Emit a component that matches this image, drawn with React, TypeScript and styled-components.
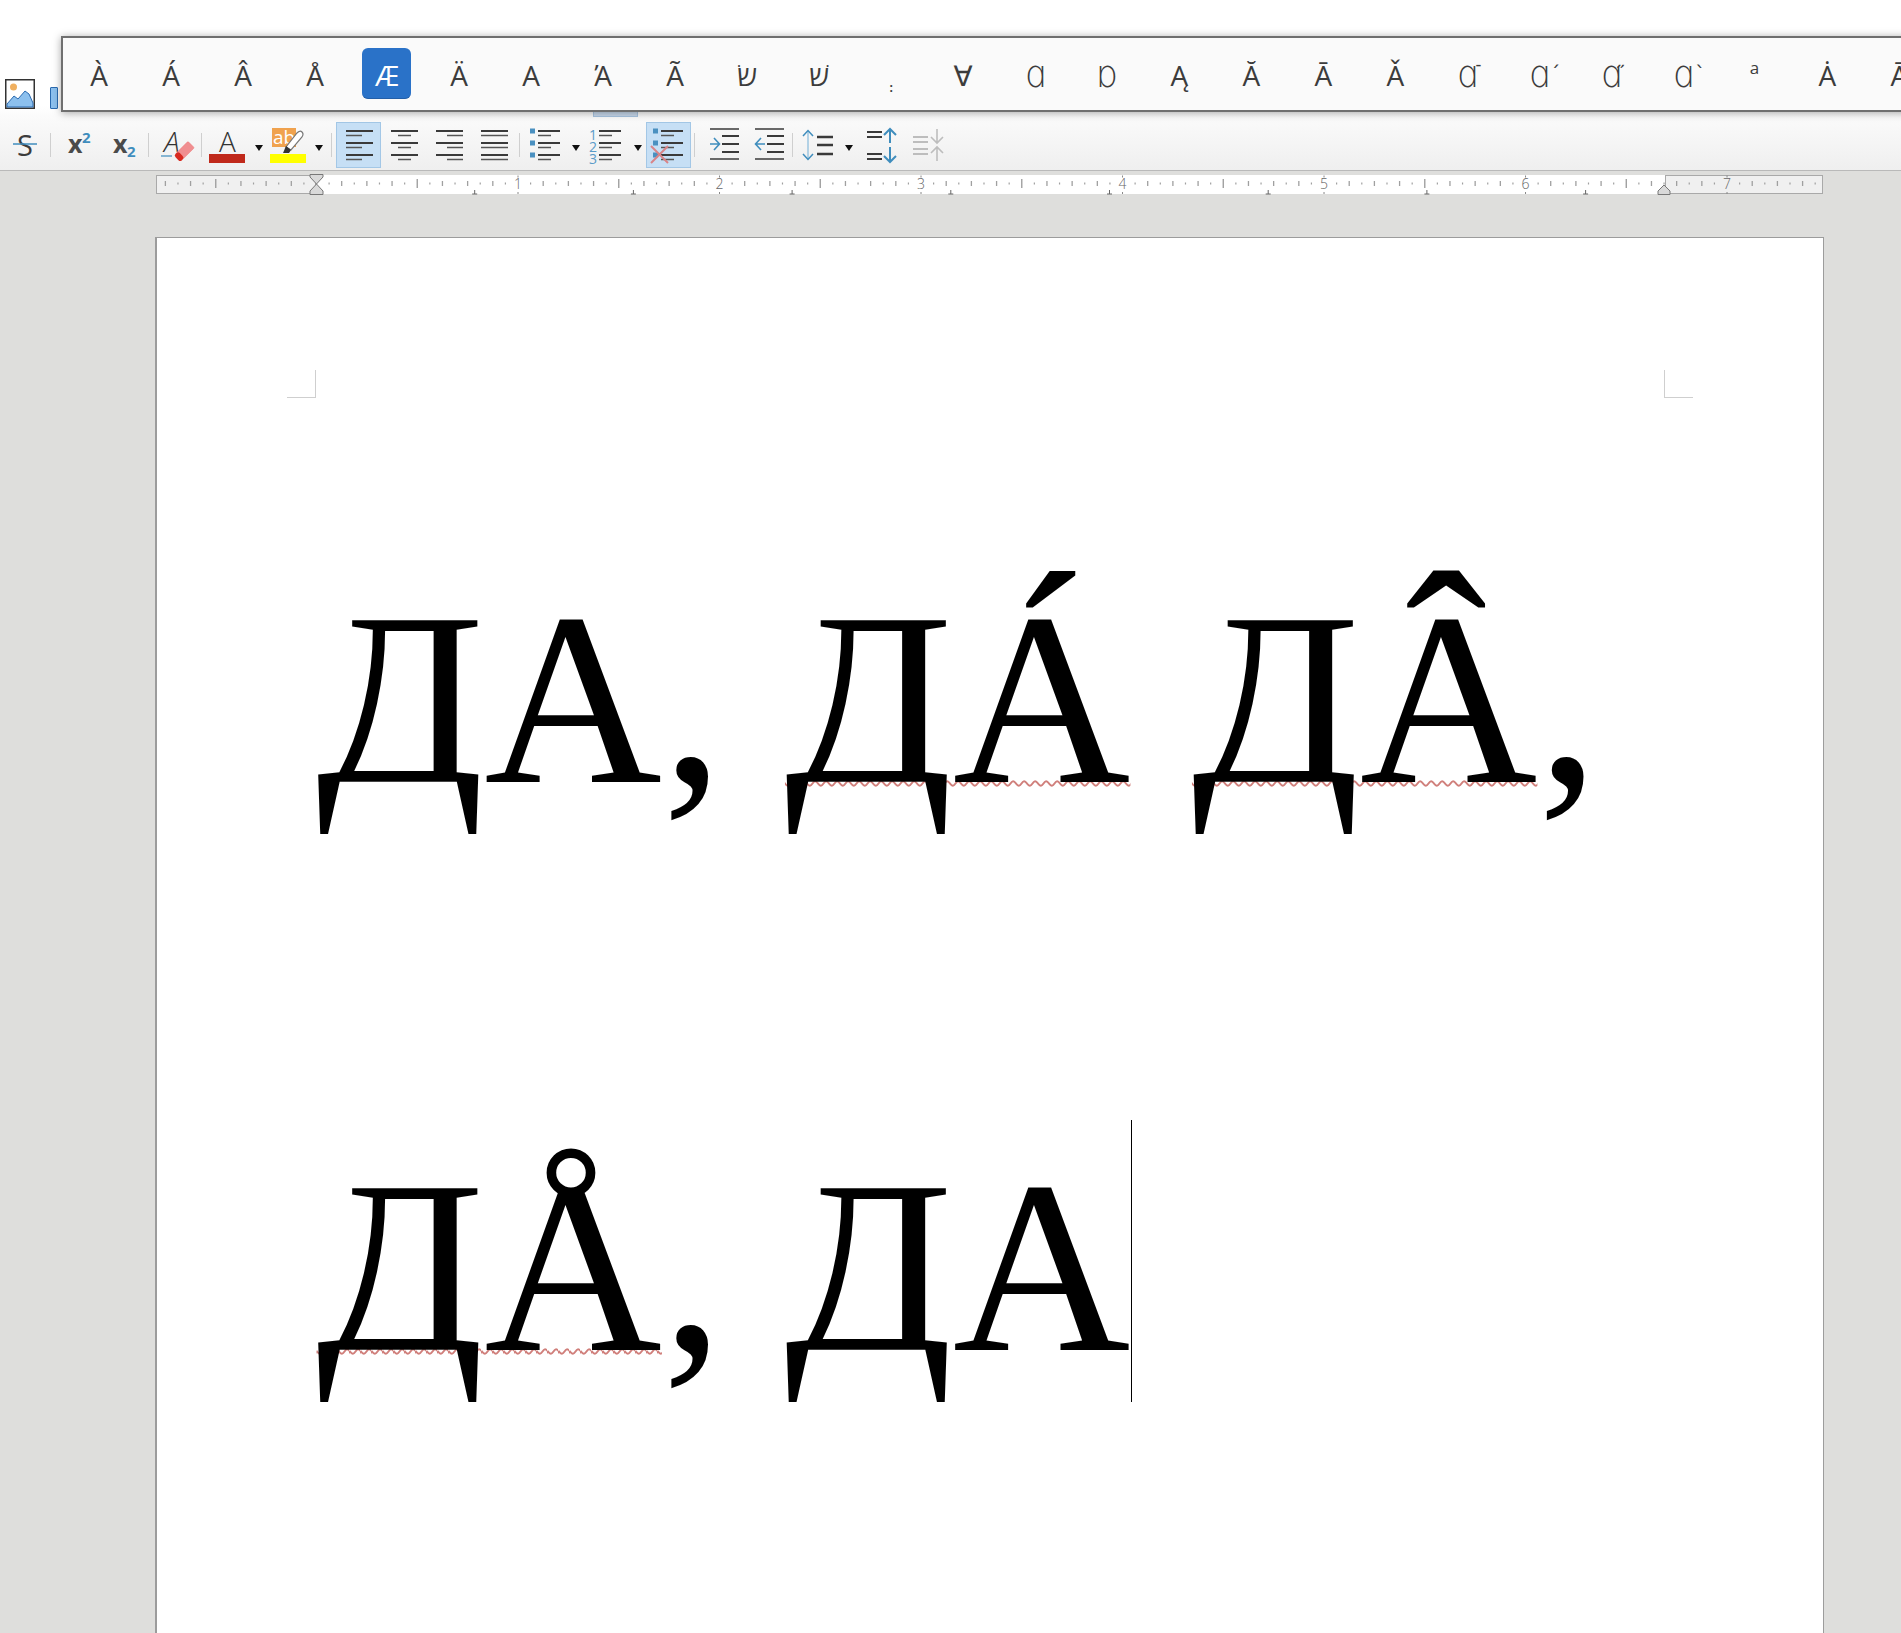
import React from "react";
import styled, { createGlobalStyle } from "styled-components";

const Global = createGlobalStyle`
  html, body { margin: 0; padding: 0; background: #dededc; overflow: hidden; }
  #root { height: 1633px; overflow: hidden; }
`;

const BLUE = "#3f8dbd";
const INK = "#3a3a3a";

const Shell = styled.div`
  position: relative;
  width: 1901px;
  height: 1633px;
  overflow: hidden;
  background: #dededc;
  font-family: "Open Sans", "DejaVu Sans", sans-serif;
`;
const TopBar = styled.header`
  height: 170px;
  border-bottom: 1px solid #b9b9b9;
  background: linear-gradient(#fff 0, #fff 62%, #fafafa 70%, #efefef 100%);
`;
const UpperRow = styled.div`
  display: flex;
  align-items: flex-start;
  height: 122px;
`;
const PictureIcon = styled.svg`
  width: 30px;
  height: 30px;
  margin: 79px 0 0 5px;
`;
const BlueBar = styled.div`
  box-sizing: border-box;
  width: 8px;
  height: 22px;
  margin: 87px 0 0 15px;
  background: #8cc0ee;
  border: 1px solid #2a6ab0;
  border-radius: 1px;
`;
const HiddenActive = styled.div`
  box-sizing: border-box;
  width: 45px;
  height: 27px;
  margin: 90px 0 0 535px;
  background: #c8d9ec;
  border: 1px solid #a8c4e0;
`;
const LowerRow = styled.div`
  display: flex;
  align-items: flex-start;
  height: 46px;
  padding-left: 2px;
`;
const Btn = styled.div<{ $active?: boolean; $w?: number }>`
  box-sizing: border-box;
  flex: none;
  position: relative;
  width: ${(p) => p.$w ?? 45}px;
  height: 46px;
  background: ${(p) => (p.$active ? "#c6dff5" : "transparent")};
  outline: ${(p) => (p.$active ? "1px solid #a3c7e6" : "none")};
  outline-offset: -1px;
  svg { display: block; }
`;
const Sep = styled.div<{ $l: number; $r: number }>`
  flex: none;
  width: 1px;
  height: 24px;
  margin: 11px ${(p) => p.$r}px 0 ${(p) => p.$l}px;
  background: #cfcfcf;
`;
const CaretBtn = styled.div<{ $w: number }>`
  flex: none;
  display: flex;
  justify-content: center;
  width: ${(p) => p.$w}px;
  padding-top: 23px;
  &::after {
    content: "";
    border-left: 4.5px solid transparent;
    border-right: 4.5px solid transparent;
    border-top: 6px solid #111;
  }
`;
const Popup = styled.div`
  position: absolute;
  left: 61px;
  top: 36px;
  display: flex;
  height: 72px;
  width: 1900px;
  border: 2px solid #6f6f6f;
  background: #fafafa;
  box-shadow: 0 1px 8px rgba(0, 0, 0, 0.35);
`;
const Cell = styled.div<{ $sel?: boolean; $tiny?: boolean; $sup?: boolean }>`
  position: relative;
  flex: none;
  display: flex;
  align-items: center;
  justify-content: center;
  width: 72.03px;
  height: 72px;
  padding-top: 2px;
  box-sizing: border-box;
  font-size: ${(p) => (p.$tiny ? 12 : p.$sup ? 17 : 28)}px;
  font-weight: 400;
  color: ${(p) => (p.$sel ? "#fff" : "#3c3c3c")};
  line-height: 1;
  z-index: 0;
  &::before {
    content: "";
    display: ${(p) => (p.$sel ? "block" : "none")};
    position: absolute;
    z-index: -1;
    left: 11px;
    top: 10px;
    width: 49px;
    height: 51px;
    border-radius: 6px;
    background: #2a72c8;
    border-bottom: 1px solid #235fa8;
    box-sizing: border-box;
  }
`;
const Tall = styled.span`
  display: inline-block;
  font-weight: 300;
  transform: scale(1.25, 1.35);
  transform-origin: 50% 80%;
`;
const Mod = styled.span<{ $x: number; $y: number; $s?: number }>`
  display: inline-block;
  width: 0;
  font-size: ${(p) => p.$s ?? 20}px;
  transform: translate(${(p) => p.$x}px, ${(p) => p.$y}px);
`;
const Tiny = styled.span`
  transform: translateY(13px);
  font-weight: 700;
`;
const Sup = styled.span`
  transform: translate(-1px, -8px);
`;
const Main = styled.main`
  padding-top: 4px;
`;
const Ruler = styled.div`
  position: relative;
  display: flex;
  width: 1667px;
  height: 19px;
  margin-left: 156px;
`;
const RulerSide = styled.div<{ $w: number }>`
  box-sizing: border-box;
  flex: none;
  width: ${(p) => p.$w}px;
  background: #f0f0f0;
  border: 1px solid #a9a9a9;
`;
const RulerBody = styled.div`
  flex: 1;
  background: #fff;
`;
const RulerMarks = styled.svg`
  position: absolute;
  left: 0;
  top: -1px;
  width: 1667px;
  height: 21px;
  overflow: visible;
`;
const Page = styled.section`
  box-sizing: border-box;
  width: 1669px;
  height: 1500px;
  margin: 43px 0 0 154.5px;
  background: #fff;
  border: 1px solid #9c9c9c;
  border-bottom: 0;
  border-left-width: 2px;
  padding-top: 132px;
`;
const Corners = styled.div`
  display: flex;
  justify-content: space-between;
  padding: 0 130px 0 130.5px;
`;
const Corner = styled.div<{ $right?: boolean }>`
  width: 29px;
  height: 28px;
  box-sizing: border-box;
  border-bottom: 1px solid #cfcfcf;
  border-${(p) => (p.$right ? "left" : "right")}: 1px solid #cfcfcf;
`;
const Body = styled.div`
  margin-top: 17px;
  padding-left: 160px;
  font-family: "Liberation Serif", "Times New Roman", serif;
  font-weight: 400;
  font-size: 246px;
  line-height: 568px;
  color: #000;
  white-space: pre;
`;
const Line = styled.div`
  height: 568px;
`;
const Misspelt = styled.span`
  text-decoration: underline wavy #d07f7b 1.5px;
  text-underline-offset: -2px;
  text-decoration-skip-ink: none;
`;
const TextCaret = styled.span`
  display: inline-block;
  width: 1px;
  height: 282px;
  margin-left: 1px;
  background: #000;
  vertical-align: -52px;
`;

const L = ({ a, b, y, w = 2, c = INK }: { a: number; b: number; y: number; w?: number; c?: string }) => (
  <line x1={a} x2={b} y1={y} y2={y} stroke={c} strokeWidth={w} />
);
const Ico = ({ children, w = 45 }: { children: React.ReactNode; w?: number }) => (
  <svg width={w} height={46} viewBox={`0 0 ${w} 46`}>
    {children}
  </svg>
);
const FONT = '"Open Sans", sans-serif';

const Align = ({ mode }: { mode: "l" | "c" | "r" | "j" }) => {
  const ys = [9, 21, 33];
  const shortA = mode === "l" ? 10 : mode === "c" ? 17 : mode === "r" ? 21 : 10;
  const shortB = mode === "l" ? 26 : mode === "c" ? 30 : 37;
  return (
    <Ico>
      {ys.map((y) => (
        <g key={y}>
          <L a={10} b={37} y={y} />
          <L a={shortA} b={mode === "j" ? 37 : shortB} y={y + 4.5} w={1.5} c="#555" />
        </g>
      ))}
    </Ico>
  );
};
const BulletList = ({ x = false }: { x?: boolean }) => (
  <Ico>
    {[9, 21, 33].map((y) => (
      <g key={y}>
        <rect x={7} y={y - 2.5} width={5} height={5} fill="#4a90c0" />
        <L a={15} b={37} y={y} />
        <L a={15} b={28} y={y + 4.5} w={1.5} c="#555" />
      </g>
    ))}
    {x && <path d="M5 24 L22 41 M22 24 L5 41" stroke="#d98488" strokeWidth={2} />}
  </Ico>
);
const NumberList = () => (
  <Ico>
    {[9, 21, 33].map((y, i) => (
      <g key={y}>
        <text x={9} y={y + 9} textAnchor="middle" fontFamily={FONT} fontSize={14} fill="#5a9bc8">
          {i + 1}
        </text>
        <L a={15} b={37} y={y} />
        <L a={15} b={28} y={y + 4.5} w={1.5} c="#555" />
      </g>
    ))}
  </Ico>
);
const Indent = ({ out = false }: { out?: boolean }) => (
  <Ico>
    <L a={8} b={37} y={7} w={1.5} />
    <L a={8} b={37} y={37} w={1.5} />
    {[14, 22, 30].map((y) => (
      <L key={y} a={20} b={37} y={y} />
    ))}
    {out ? (
      <path d="M18 22 H9 M14 16 L8.5 22 L14 28" stroke={BLUE} strokeWidth={1.6} fill="none" />
    ) : (
      <path d="M8 22 H17 M12 16 L17.5 22 L12 28" stroke={BLUE} strokeWidth={1.6} fill="none" />
    )}
  </Ico>
);

const Ruling = () => {
  const x0 = 160.5;
  const step = 12.594;
  const ticks: React.ReactNode[] = [];
  for (let i = -12; i <= 119; i++) {
    const x = x0 + i * step;
    if (i === 0) continue;
    if (i % 16 === 0) {
      ticks.push(
        <g key={i}>
          <text x={x} y={15} textAnchor="middle" fontFamily={FONT} fontSize={14} fontWeight={300} fill="#666">
            {i / 16}
          </text>
          <rect x={x - 0.5} y={1.5} width={1} height={2} fill="#888" />
          <rect x={x - 0.5} y={18} width={1} height={2} fill="#888" />
        </g>
      );
    } else {
      const h = i % 8 === 0 ? 9 : i % 2 === 0 ? 5 : 2;
      const w = i % 8 === 0 ? 1.4 : i % 2 === 0 ? 1.3 : 1.2;
      ticks.push(<rect key={i} x={x - w / 2} y={9.5 - h / 2} width={w} height={h} fill="#a0a0a0" />);
    }
  }
  const tabs = [0, 1, 2, 3, 4, 5, 6, 7].map((k) => 318.7 + k * 158.7);
  return (
    <RulerMarks viewBox="0 0 1667 21">
      {ticks}
      {tabs.map((x) => (
        <path key={x} d={`M${x} 16 V20 M${x - 2.5} 20 H${x + 2.5}`} stroke="#666" strokeWidth={1} fill="none" />
      ))}
      <path d="M154 0.5 H167 V3 L160.5 10 L154 3 Z" fill="#d9d9d9" stroke="#777" />
      <path d="M160.5 10 L167 17 V20.5 H154 V17 Z" fill="#d9d9d9" stroke="#777" />
      <path d="M1508 11 L1514 17 V20.5 H1502 V17 Z" fill="#d9d9d9" stroke="#777" />
    </RulerMarks>
  );
};

const chars: { g: React.ReactNode; sel?: boolean; tiny?: boolean; sup?: boolean }[] = [
  { g: "À" }, { g: "Á" }, { g: "Â" }, { g: "Å" }, { g: "Æ", sel: true }, { g: "Ä" }, { g: "A" }, { g: "Ά" }, { g: "Ã" },
  { g: "שׂ" }, { g: "שׁ" },
  { g: <Tiny>:</Tiny>, tiny: true },
  { g: "∀" },
  { g: <Tall>ɑ</Tall> }, { g: <Tall>ɒ</Tall> },
  { g: "Ą" }, { g: "Ă" }, { g: "Ā" }, { g: "Ǎ" },
  { g: <><Tall>ɑ</Tall><Mod $x={-1} $y={-11} $s={20}>˗</Mod></> },
  { g: <><Tall>ɑ</Tall><Mod $x={2} $y={-2}>ˊ</Mod></> },
  { g: <><Tall>ɑ</Tall><Mod $x={-4} $y={-2}>˝</Mod></> },
  { g: <><Tall>ɑ</Tall><Mod $x={3} $y={-2}>ˋ</Mod></> },
  { g: <Sup>a</Sup>, sup: true },
  { g: "Ȧ" }, { g: "Ā" },
];

export default function App() {
  return (
    <Shell>
      <Global />
      <TopBar>
        <UpperRow>
          <PictureIcon viewBox="0 0 30 30">
            <rect x="0.75" y="0.75" width="28.5" height="28.5" fill="#fff" stroke="#333" strokeWidth="1.5" />
            <path d="M2 28 V25 L9 17 L13 20 L20 12 L24 15 L28 24 V28 Z" fill="#8cc0ee" stroke="#2a6ab0" strokeWidth="1" />
            <circle cx="8.5" cy="8" r="3.5" fill="#f0b060" />
          </PictureIcon>
          <BlueBar />
          <HiddenActive />
        </UpperRow>
        <LowerRow>
          <Btn>
            <Ico>
              <text x={23} y={34} textAnchor="middle" fontFamily={FONT} fontSize={29} fontWeight={400} fill="#3c3c3c">S</text>
              <L a={11} b={35} y={22} w={1.5} c={BLUE} />
            </Ico>
          </Btn>
          <Sep $l={3} $r={5} />
          <Btn>
            <Ico>
              <text x={12} y={31} fontFamily={FONT} fontSize={25} fontWeight={700} fill="#4a4a4a">x</text>
              <text x={26} y={21} fontFamily={FONT} fontSize={15} fontWeight={700} fill={BLUE}>2</text>
            </Ico>
          </Btn>
          <Btn>
            <Ico>
              <text x={12} y={31} fontFamily={FONT} fontSize={25} fontWeight={700} fill="#4a4a4a">x</text>
              <text x={26} y={35} fontFamily={FONT} fontSize={15} fontWeight={700} fill={BLUE}>2</text>
            </Ico>
          </Btn>
          <Sep $l={2} $r={4} />
          <Btn>
            <Ico>
              <text x={11} y={30} fontFamily={FONT} fontSize={28} fontWeight={300} fontStyle="italic" fill="#333">A</text>
              <L a={8} b={19} y={34} w={1.2} c={BLUE} />
              <g transform="rotate(-45 30 30)">
                <rect x={25} y={26} width={16} height={9} rx={1} fill="#f08e90" stroke="#e77" strokeWidth={0.5} />
                <rect x={21} y={26} width={6} height={9} rx={2.5} fill="#d82a20" />
              </g>
            </Ico>
          </Btn>
          <Sep $l={3} $r={3} />
          <Btn>
            <Ico>
              <text x={22.5} y={30} textAnchor="middle" fontFamily={FONT} fontSize={28} fontWeight={300} fill="#333">A</text>
              <rect x={4} y={32} width={36} height={9} fill="#c0291b" />
            </Ico>
          </Btn>
          <CaretBtn $w={17} />
          <Btn $w={42}>
            <Ico w={42}>
              <rect x={5} y={6} width={24} height={19} fill="#f0a24e" />
              <text x={6} y={22} fontFamily={FONT} fontSize={19} fill="#fff">ab</text>
              <path d="M19 25 L30 11 Q33 8 35 10 Q37 12 35 15 L24 28 Z" fill="#fff" stroke="#777" strokeWidth={1.2} />
              <path d="M16 31 L19 24 L24 28 L22 31 Z" fill="#333" />
              <rect x={3} y={32} width={36} height={9} fill="#ffff00" />
            </Ico>
          </Btn>
          <CaretBtn $w={20} />
          <Sep $l={2} $r={4} />
          <Btn $active><Align mode="l" /></Btn>
          <Btn><Align mode="c" /></Btn>
          <Btn><Align mode="r" /></Btn>
          <Btn><Align mode="j" /></Btn>
          <Sep $l={3} $r={3} />
          <Btn><BulletList /></Btn>
          <CaretBtn $w={16} />
          <Btn><NumberList /></Btn>
          <CaretBtn $w={17} />
          <Btn $active><BulletList x /></Btn>
          <Sep $l={3} $r={7} />
          <Btn><Indent /></Btn>
          <Btn><Indent out /></Btn>
          <Sep $l={0} $r={0} />
          <Btn $w={46}>
            <Ico w={46}>
              <path d="M15 9 V37" stroke="#9cc6e0" strokeWidth={1.5} fill="none" />
              <path d="M10 14 L15 8.5 L20 14 M10 32 L15 37.5 L20 32" stroke={BLUE} strokeWidth={1.5} fill="none" />
              {[15, 23, 32].map((y) => <L key={y} a={24} b={40} y={y} w={2.5} />)}
            </Ico>
          </Btn>
          <CaretBtn $w={20} />
          <Btn $w={46}>
            <Ico w={46}>
              <L a={8} b={23} y={10} /><L a={8} b={23} y={15} />
              <L a={8} b={23} y={32} /><L a={8} b={23} y={37} />
              <path d="M31 21 V8 M25 13 L31 7 L37 13 M31 25 V39 M25 34 L31 40 L37 34" stroke={BLUE} strokeWidth={2} fill="none" />
            </Ico>
          </Btn>
          <Btn>
            <Ico>
              <L a={8} b={23} y={15} c="#bdbdbd" /><L a={8} b={23} y={20} c="#bdbdbd" />
              <L a={8} b={23} y={27} c="#bdbdbd" /><L a={8} b={23} y={32} c="#bdbdbd" />
              <path d="M32 7 V20 M26 15 L32 21 L38 15 M32 39 V26 M26 31 L32 25 L38 31" stroke="#bdbdbd" strokeWidth={1.6} fill="none" />
            </Ico>
          </Btn>
        </LowerRow>
      </TopBar>
      <Popup>
        {chars.map((c, i) => (
          <Cell key={i} $sel={c.sel} $tiny={c.tiny} $sup={c.sup}>
            {c.g}
          </Cell>
        ))}
      </Popup>
      <Main>
        <Ruler>
          <RulerSide $w={160} />
          <RulerBody />
          <RulerSide $w={158} />
          <Ruling />
        </Ruler>
        <Page>
          <Corners>
            <Corner />
            <Corner $right />
          </Corners>
          <Body>
            <Line>
              {"ДА, "}
              <Misspelt>ДÁ</Misspelt>
              {" "}
              <Misspelt>ДÂ</Misspelt>
              {","}
            </Line>
            <Line>
              <Misspelt>ДÅ</Misspelt>
              {", ДА"}
              <TextCaret />
            </Line>
          </Body>
        </Page>
      </Main>
    </Shell>
  );
}
